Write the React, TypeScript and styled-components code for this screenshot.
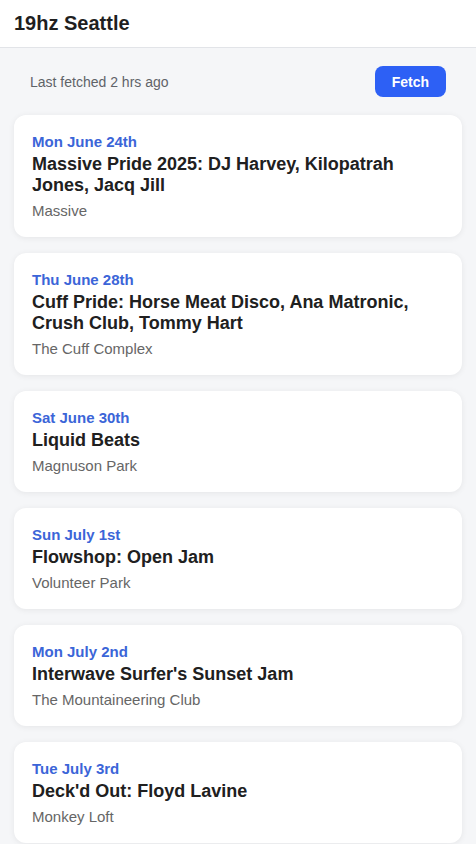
import styled, { createGlobalStyle } from 'styled-components';

type EventItem = {
  date: string;
  title: string;
  venue: string;
};

const EVENTS: EventItem[] = [
  {
    date: 'Mon June 24th',
    title: 'Massive Pride 2025: DJ Harvey, Kilopatrah Jones, Jacq Jill',
    venue: 'Massive',
  },
  {
    date: 'Thu June 28th',
    title: 'Cuff Pride: Horse Meat Disco, Ana Matronic, Crush Club, Tommy Hart',
    venue: 'The Cuff Complex',
  },
  { date: 'Sat June 30th', title: 'Liquid Beats', venue: 'Magnuson Park' },
  { date: 'Sun July 1st', title: 'Flowshop: Open Jam', venue: 'Volunteer Park' },
  {
    date: 'Mon July 2nd',
    title: "Interwave Surfer's Sunset Jam",
    venue: 'The Mountaineering Club',
  },
  { date: 'Tue July 3rd', title: "Deck'd Out: Floyd Lavine", venue: 'Monkey Loft' },
];

export default function App() {
  return (
    <>
      <GlobalStyle />
      <Header>
        <Title>19hz Seattle</Title>
      </Header>
      <Main>
        <StatusRow>
          <StatusText>Last fetched 2 hrs ago</StatusText>
          <FetchButton>Fetch</FetchButton>
        </StatusRow>
        <EventList>
          {EVENTS.map((event) => (
            <EventCard key={event.title}>
              <EventDate>{event.date}</EventDate>
              <EventTitle>{event.title}</EventTitle>
              <EventVenue>{event.venue}</EventVenue>
            </EventCard>
          ))}
        </EventList>
      </Main>
    </>
  );
}

const GlobalStyle = createGlobalStyle`
  * {
    box-sizing: border-box;
  }

  body {
    margin: 0;
    background-color: #f5f6f8;
    font-family: 'Liberation Sans', Arial, sans-serif;
    color: #222;
  }
`;

const Header = styled.header`
  height: 48px;
  padding: 0 14px;

  display: flex;
  align-items: center;

  background-color: #fff;
  border-bottom: 1px solid #e2e4e8;
`;

const Title = styled.h1`
  margin: 0;

  font-size: 20px;
  font-weight: 700;
  color: #1f1f1f;
`;

const Main = styled.main`
  padding: 18px 14px;
`;

const StatusRow = styled.div`
  padding: 0 16px;
  margin-bottom: 18px;

  display: flex;
  justify-content: space-between;
  align-items: center;
`;

const StatusText = styled.span`
  font-size: 14px;
  color: #5f6368;
`;

const FetchButton = styled.button`
  height: 31px;
  padding: 0 17px;

  background-color: #2d60f5;
  color: #fff;
  border: none;
  border-radius: 8px;

  font-family: inherit;
  font-size: 14px;
  font-weight: 700;
`;

const EventList = styled.div`
  display: flex;
  flex-direction: column;
  gap: 16px;
`;

const EventCard = styled.article`
  padding: 18px 18px 17px;

  display: flex;
  flex-direction: column;

  background-color: #fff;
  border-radius: 12px;
  box-shadow: 0 1px 6px rgba(0, 0, 0, 0.07);
`;

const EventDate = styled.div`
  margin-bottom: 3px;

  font-size: 15px;
  line-height: 18px;
  font-weight: 700;
  color: #3b65d8;
`;

const EventTitle = styled.h2`
  margin: 0;

  font-size: 18px;
  line-height: 21px;
  font-weight: 700;
  color: #202020;
`;

const EventVenue = styled.div`
  margin-top: 6px;

  font-size: 15px;
  line-height: 18px;
  color: #666;
`;
